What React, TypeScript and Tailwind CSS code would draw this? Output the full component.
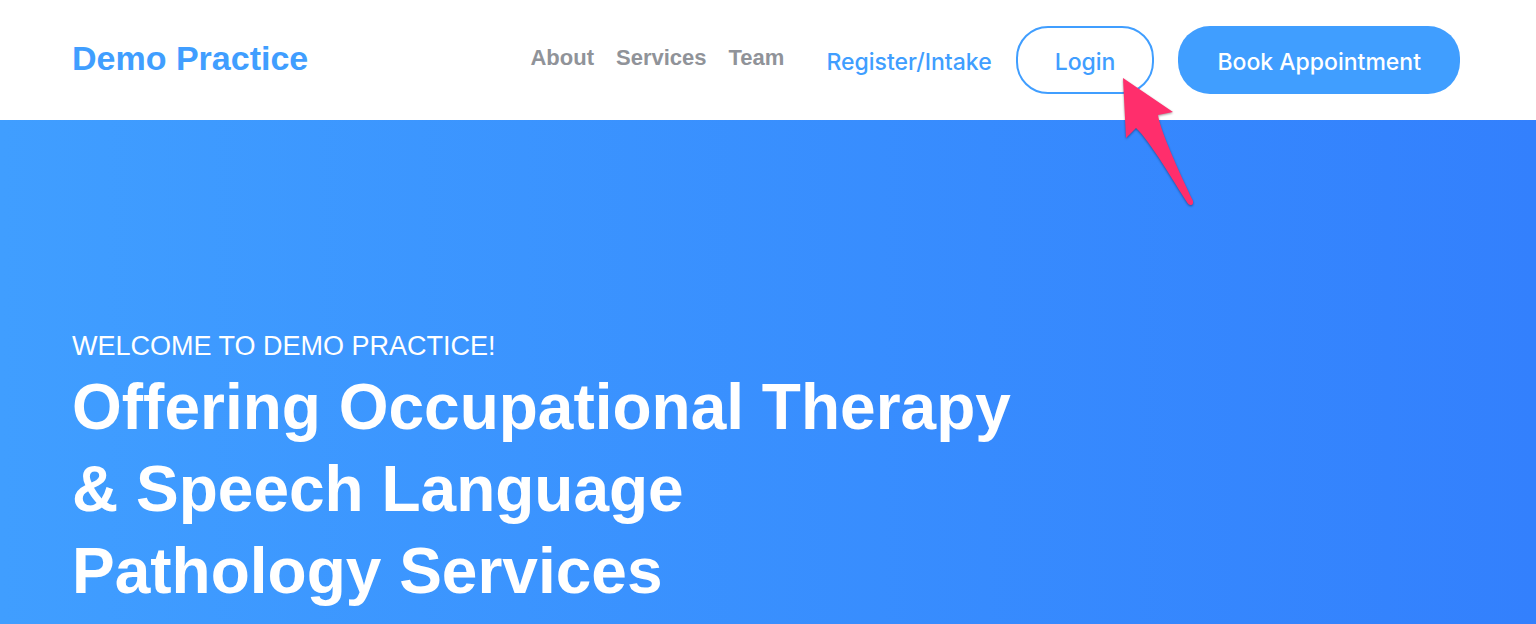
const navLinks = ["About", "Services", "Team"];

function Pointer() {
  return (
    <svg
      aria-hidden="true"
      className="pointer-events-none absolute top-12 left-24 z-10 h-[140px] w-[100px] drop-shadow-[0_1px_1px_rgba(0,0,0,0.4)]"
      viewBox="0 0 100 140"
      fill="#ff2e6c"
    >
      <path d="M11 4 L61 38 L46 41 C48 56 67 98 81 127 Q81.500 131 79 131 Q77 131.500 75.500 129 C62 108 38 67 24 54 L14 64 Z" />
    </svg>
  );
}

function Header() {
  return (
    <header className="flex items-center justify-between bg-white py-[26px] pr-[76px] pl-[72px] font-medium text-[#409eff]">
      <a href="#" className="pb-1 font-['Liberation_Sans',sans-serif] text-[34px] leading-10 font-bold">
        Demo Practice
      </a>
      <div className="flex items-center gap-6">
        <nav className="mr-[18px] flex gap-[22px] pb-1 font-['Liberation_Sans',sans-serif] text-[22px] leading-7 font-bold text-[#909399]">
          {navLinks.map((label) => (
            <a key={label} href={`#${label.toLowerCase()}`}>
              {label}
            </a>
          ))}
        </nav>
        <a href="#register" className="pt-1 font-['Inter',sans-serif] text-[23px] leading-7">
          Register/Intake
        </a>
        <div className="relative">
          <button className="h-[68px] cursor-pointer rounded-4xl border-2 border-[#409eff] px-[37px] pt-1 font-['Inter',sans-serif] text-[23px] leading-7">
            Login
          </button>
          <Pointer />
        </div>
        <button className="h-[68px] cursor-pointer rounded-4xl bg-[#409eff] px-[39px] pt-1 font-['Inter',sans-serif] text-[23px] leading-7 text-white">
          Book Appointment
        </button>
      </div>
    </header>
  );
}

export default function App() {
  return (
    <div className="flex min-h-screen flex-col bg-white font-['Liberation_Sans',sans-serif]">
      <Header />
      <main className="grow bg-linear-to-r from-[#409eff] to-[#3380fd] px-[72px] pt-[206px] text-white">
        <p className="text-[27px] leading-10 uppercase">Welcome to Demo Practice!</p>
        <h1 className="text-[64px] leading-[82px] font-bold">
          Offering Occupational Therapy
          <br />
          &amp; Speech Language
          <br />
          Pathology Services
        </h1>
      </main>
    </div>
  );
}
